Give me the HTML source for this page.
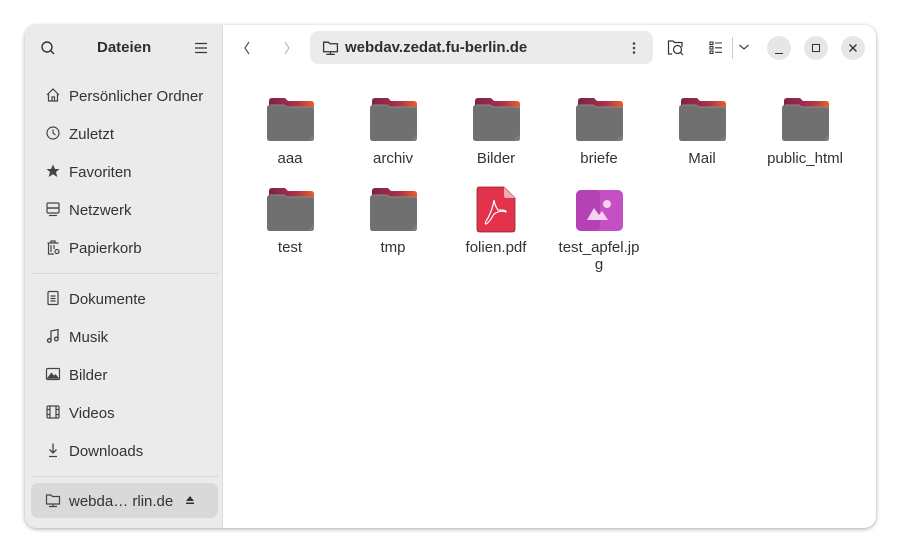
<!DOCTYPE html><html><head><meta charset="utf-8"><style>
*{margin:0;padding:0;box-sizing:border-box}
body{width:901px;height:553px;background:#fff;font-family:"Liberation Sans","DejaVu Sans",sans-serif;position:relative;overflow:hidden}
.win{position:absolute;left:25px;top:25px;width:851px;height:503px;border-radius:12px;background:#fff;box-shadow:0 1px 4px rgba(0,0,0,.35);overflow:hidden}
.side{position:absolute;left:0;top:0;width:198px;height:503px;background:#ebebeb;border-right:1px solid #dcdcdc}
.t{position:absolute;font-size:15px;color:#303030}
.it{position:absolute;left:44px;font-size:15px;color:#333;margin-top:2px}
.ic{position:absolute;left:20px;width:16px;height:16px}
.sep{position:absolute;left:7px;width:186px;height:1px;background:#d4d4d4}
.lab{position:absolute;width:100px;text-align:center;font-size:15px;color:#333;line-height:17px}
.fold{position:absolute;width:47px;height:43px}
.btn{position:absolute;width:24px;height:24px;border-radius:12px;background:#e6e6e6}
</style></head><body>
<div class="win">
<div class="side">
<svg style="position:absolute;left:15px;top:15px" width="16" height="16" viewBox="0 0 16 16" fill="none" stroke="#333" stroke-width="1.4"><circle cx="7" cy="7" r="5"/><path d="M10.5 10.5L14 14"/></svg>
<div class="t" style="left:72px;top:14px;font-weight:bold">Dateien</div>
<svg style="position:absolute;left:170px;top:17px" width="12" height="12" viewBox="0 0 12 12" stroke="#333" stroke-width="1.2"><path d="M0 1.5H12M0 6H12M0 10.5H12"/></svg>
<svg class="ic" style="top:62px" viewBox="0 0 16 16" fill="none" stroke="#444" stroke-width="1.2"><path d="M2 8L8 2L14 8M3.5 6.5V14H12.5V6.5M7 14V10H9.5V14"/></svg>
<div class="it" style="top:61px">Persönlicher Ordner</div>
<svg class="ic" style="top:100px" viewBox="0 0 16 16" fill="none" stroke="#444" stroke-width="1.2"><circle cx="8" cy="8" r="6"/><path d="M8 4.5V8L10.5 10"/></svg>
<div class="it" style="top:99px">Zuletzt</div>
<svg class="ic" style="top:138px" viewBox="0 0 16 16"><path fill="#444" d="M8 1.5L10 6H14.5L11 9L12.3 14L8 11.2L3.7 14L5 9L1.5 6H6Z"/></svg>
<div class="it" style="top:137px">Favoriten</div>
<svg class="ic" style="top:176px" viewBox="0 0 16 16" fill="none" stroke="#444" stroke-width="1.2"><rect x="2" y="2" width="12" height="5" rx="1"/><rect x="2" y="7" width="12" height="5" rx="1"/><path d="M4 14.5H12"/></svg>
<div class="it" style="top:175px">Netzwerk</div>
<svg class="ic" style="top:214px" viewBox="0 0 16 16" fill="none" stroke="#444" stroke-width="1.2"><path d="M2.5 4H13.5M6 4V2H10V4M3.5 4V15H9M6 6V13M9 6V10"/><circle cx="12" cy="12.5" r="2"/></svg>
<div class="it" style="top:213px">Papierkorb</div>
<div class="sep" style="top:248px"></div>
<svg class="ic" style="top:265px" viewBox="0 0 16 16" fill="none" stroke="#444" stroke-width="1.2"><rect x="3" y="1.5" width="10" height="13" rx="1"/><path d="M5.5 6H10.5M5.5 8.5H10.5M5.5 11H10.5"/></svg>
<div class="it" style="top:264px">Dokumente</div>
<svg class="ic" style="top:303px" viewBox="0 0 16 16" fill="none" stroke="#444" stroke-width="1.3"><path d="M6 12.5V3L13 1.5V11"/><circle cx="4.3" cy="12.5" r="1.8"/><circle cx="11.3" cy="11" r="1.8"/></svg>
<div class="it" style="top:302px">Musik</div>
<svg class="ic" style="top:341px" viewBox="0 0 16 16" fill="none" stroke="#444" stroke-width="1.2"><rect x="1.5" y="2.5" width="13" height="11" rx="1"/><path d="M3 12L6.5 7.5L9 10.5L10.5 9L13 12Z" fill="#444"/></svg>
<div class="it" style="top:340px">Bilder</div>
<svg class="ic" style="top:379px" viewBox="0 0 16 16" fill="none" stroke="#444" stroke-width="1.2"><rect x="2" y="2" width="12" height="12" rx="1"/><path d="M5 2V14M11 2V14M2 5.5H5M2 10.5H5M11 5.5H14M11 10.5H14"/></svg>
<div class="it" style="top:378px">Videos</div>
<svg class="ic" style="top:417px" viewBox="0 0 16 16" fill="none" stroke="#444" stroke-width="1.3"><path d="M8 1.5V11M4.5 7.5L8 11L11.5 7.5M4 14.5H12"/></svg>
<div class="it" style="top:416px">Downloads</div>
<div class="sep" style="top:451px"></div>
<div style="position:absolute;left:6px;top:458px;width:187px;height:35px;border-radius:7px;background:#d9d9d9"></div>
<svg class="ic" style="top:467px" viewBox="0 0 16 16" fill="none" stroke="#444" stroke-width="1.2"><path d="M1.5 3H6L7.5 4.5H14.5V12H1.5Z"/><path d="M4 14.5H12M8 12V14.5"/></svg>
<div class="it" style="top:466px">webda… rlin.de</div>
<svg style="position:absolute;left:160px;top:470px" width="10" height="10" viewBox="0 0 10 10"><path d="M5 1L9 6H1Z M1 7.5H9V9H1Z" fill="#333"/></svg>
</div>
<svg style="position:absolute;left:217px;top:15px" width="10" height="16" viewBox="0 0 10 16" fill="none" stroke="#555" stroke-width="1.2"><path d="M7 2L3 8L7 14"/></svg>
<svg style="position:absolute;left:257px;top:15px" width="10" height="16" viewBox="0 0 10 16" fill="none" stroke="#bbb" stroke-width="1.2"><path d="M3 2L7 8L3 14"/></svg>
<div style="position:absolute;left:285px;top:6px;width:343px;height:33px;border-radius:8px;background:#ebebeb"></div>
<svg style="position:absolute;left:297px;top:14px" width="17" height="17" viewBox="0 0 16 16" fill="none" stroke="#333" stroke-width="1.2"><path d="M1.5 3H6L7.5 4.5H14.5V12H1.5Z"/><path d="M4 14.5H12M8 12V14.5"/></svg>
<div class="t" style="left:320px;top:14px;font-weight:bold;color:#2e2e2e">webdav.zedat.fu-berlin.de</div>
<svg style="position:absolute;left:607px;top:16px" width="4" height="14"><circle cx="2" cy="2.5" r="1.3" fill="#444"/><circle cx="2" cy="7" r="1.3" fill="#444"/><circle cx="2" cy="11.5" r="1.3" fill="#444"/></svg>
<svg style="position:absolute;left:642px;top:14px" width="18" height="18" viewBox="0 0 18 18" fill="none" stroke="#333" stroke-width="1.2"><path d="M5 15H1.5V2H6L7.5 3.5H15V8"/><circle cx="10.5" cy="10.5" r="4"/><path d="M13.5 13.5L16 16"/></svg>
<svg style="position:absolute;left:684px;top:16px" width="14" height="14" viewBox="0 0 14 14" fill="none" stroke="#333" stroke-width="1.1"><rect x="1" y="1" width="3" height="2.5"/><rect x="1" y="5.5" width="3" height="2.5"/><rect x="1" y="10" width="3" height="2.5"/><path d="M6 2H13M6 6.8H13M6 11.3H13"/></svg>
<div style="position:absolute;left:707px;top:12px;width:1px;height:22px;background:#ccc"></div>
<svg style="position:absolute;left:713px;top:17px" width="12" height="10" viewBox="0 0 12 10" fill="none" stroke="#444" stroke-width="1.2"><path d="M1.5 3L6 7L10.5 3"/></svg>
<div class="btn" style="left:742px;top:11px"></div><div style="position:absolute;left:750px;top:28px;width:8px;height:1.4px;background:#333"></div>
<div class="btn" style="left:779px;top:11px"></div><div style="position:absolute;left:787px;top:19px;width:8px;height:8px;border:1.3px solid #333"></div>
<div class="btn" style="left:816px;top:11px"></div>
<svg style="position:absolute;left:823px;top:18px" width="10" height="10" viewBox="0 0 10 10" stroke="#333" stroke-width="1.4"><path d="M1.5 1.5L8.5 8.5M8.5 1.5L1.5 8.5"/></svg>
</div>
<svg width="0" height="0" style="position:absolute"><defs>
<linearGradient id="tab" x1="0" x2="1"><stop offset="0" stop-color="#7f2148"/><stop offset=".6" stop-color="#a8324a"/><stop offset="1" stop-color="#e85e2a"/></linearGradient>
<symbol id="f" viewBox="0 0 47 43"><path d="M2 3Q2 0 5 0H18L21 3H44Q47 3 47 6V12H2Z" fill="url(#tab)"/><path d="M0 10Q0 7 3 7H17L20 9H44Q47 9 47 12V40Q47 43 44 43H3Q0 43 0 40Z" fill="#707070"/><path d="M3 7H17L20 9H44Q47 9 47 11" fill="none" stroke="#8a8a8a" stroke-width="1"/><path d="M47 36V40Q47 43 44 43H40Z" fill="#7c7c7c"/></symbol>
</defs></svg>
<svg class="fold" style="left:267px;top:98px"><use href="#f"/></svg>
<svg class="fold" style="left:370px;top:98px"><use href="#f"/></svg>
<svg class="fold" style="left:473px;top:98px"><use href="#f"/></svg>
<svg class="fold" style="left:576px;top:98px"><use href="#f"/></svg>
<svg class="fold" style="left:679px;top:98px"><use href="#f"/></svg>
<svg class="fold" style="left:782px;top:98px"><use href="#f"/></svg>
<svg class="fold" style="left:267px;top:188px"><use href="#f"/></svg>
<svg class="fold" style="left:370px;top:188px"><use href="#f"/></svg>
<svg style="position:absolute;left:476px;top:186px" width="40" height="47" viewBox="0 0 40 47"><path d="M3 1H28L39 12V43Q39 46 36 46H4Q1 46 1 43V4Q1 1 3 1Z" fill="#e3324b" stroke="#8b1f2e" stroke-width=".8"/><path d="M28 1V10Q28 12 30 12H39Z" fill="#f4a9b2"/><path d="M18 14Q17 22 12 32Q8 38 10 38Q13 37 18 28Q24 24 30 26Q31 24 22 24Q19 20 18 14Z" fill="none" stroke="#fff" stroke-width="1.2"/></svg>
<svg style="position:absolute;left:576px;top:190px" width="47" height="41" viewBox="0 0 47 41"><rect width="47" height="41" rx="5" fill="#c54fc4"/><rect x="0" y="0" width="24" height="41" rx="5" fill="#b442b5"/><circle cx="31" cy="14" r="4" fill="#f2d4f2"/><path d="M11 30L18 18L23 25L26 21L32 30Z" fill="#f2d4f2"/></svg>
<div class="lab" style="left:240px;top:150px">aaa</div>
<div class="lab" style="left:343px;top:150px">archiv</div>
<div class="lab" style="left:446px;top:150px">Bilder</div>
<div class="lab" style="left:549px;top:150px">briefe</div>
<div class="lab" style="left:652px;top:150px">Mail</div>
<div class="lab" style="left:755px;top:150px">public_html</div>
<div class="lab" style="left:240px;top:239px">test</div>
<div class="lab" style="left:343px;top:239px">tmp</div>
<div class="lab" style="left:446px;top:239px">folien.pdf</div>
<div class="lab" style="left:549px;top:239px">test_apfel.jp<br>g</div>
</body></html>
